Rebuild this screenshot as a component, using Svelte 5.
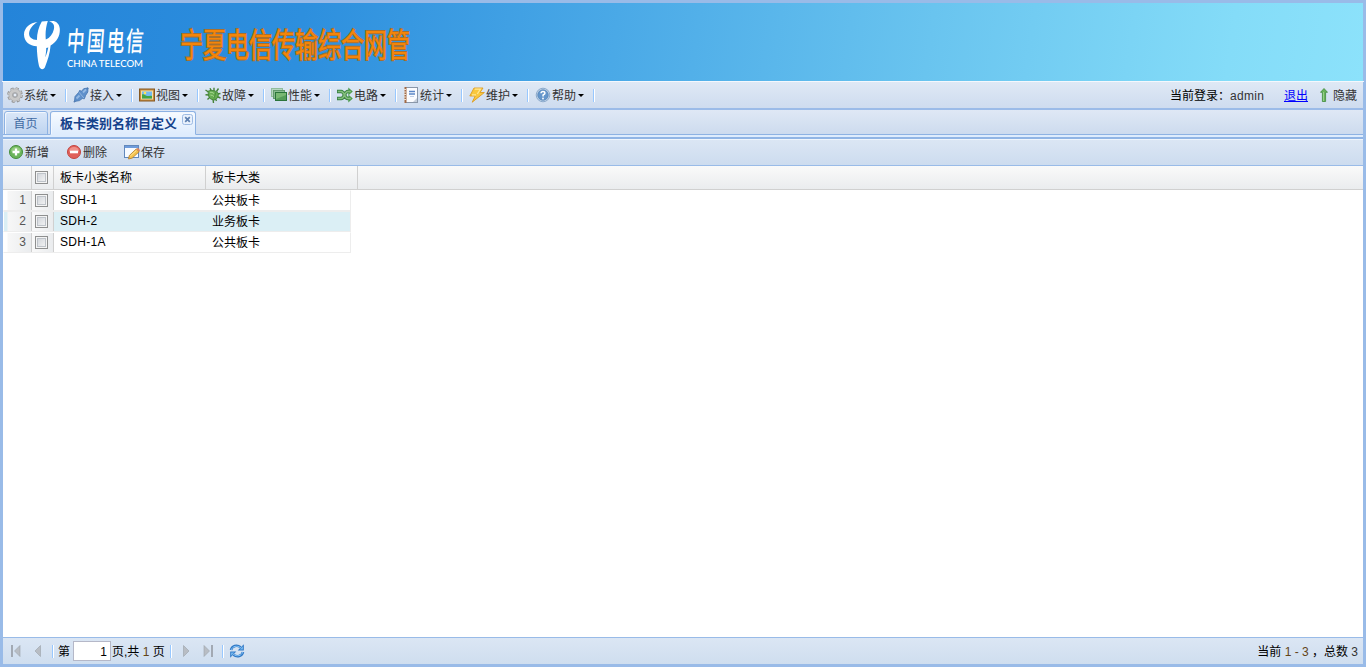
<script>
  const menus = [
    { id: 'gear', label: '系统' },
    { id: 'plug', label: '接入' },
    { id: 'view', label: '视图' },
    { id: 'bug', label: '故障' },
    { id: 'layers', label: '性能' },
    { id: 'route', label: '电路' },
    { id: 'report', label: '统计' },
    { id: 'bolt', label: '维护' },
    { id: 'help', label: '帮助' }
  ];
  const rows = [
    { name: 'SDH-1', type: '公共板卡' },
    { name: 'SDH-2', type: '业务板卡', active: true },
    { name: 'SDH-1A', type: '公共板卡' }
  ];
</script>

{#snippet icon(id)}
  <svg class="ico" width="16" height="16" viewBox="0 0 16 16">
    {#if id === 'gear'}
      <circle cx="8" cy="8" r="6.5" fill="none" stroke="#8f8f8f" stroke-width="2.6" stroke-dasharray="2.9 2.2" />
      <circle cx="8" cy="8" r="4.4" fill="none" stroke="#999" stroke-width="4" />
      <circle cx="8" cy="8" r="4.3" fill="none" stroke="#c9c9c9" stroke-width="3.2" />
      <circle cx="8" cy="8" r="6.4" fill="none" stroke="#c4c4c4" stroke-width="1.6" stroke-dasharray="2.1 2.93" />
      <circle cx="8" cy="8" r="2" fill="#e6edf7" stroke="#8c8c8c" stroke-width=".8" />
    {:else if id === 'plug'}
      <path d="M.8 15.2 3 13M13 3l2.2-2.2" stroke="#6d8cb8" stroke-width="1.6" />
      <path d="M1.5 14.5 2 9.500 6 5 6.500 3.500 8.500 4 11 1.600 15 1 14.800 5 12.600 8.400 11.400 11.800 9.300 11.500 6.500 13.600Z" fill="#5f90cb" stroke="#4473ae" stroke-width=".8" />
      <path d="m3.500 11.500 3-3M10 5.500l3-3" stroke="#93b9e4" stroke-width="1.800" /><path d="m6 5.200 5 6" stroke="#8fb4df" />
    {:else if id === 'view'}
      <rect x=".5" y="2" width="15" height="12" fill="#c58b43" stroke="#865820" />
      <rect x="2.5" y="4" width="11" height="8" fill="#76baf0" stroke="#f6df9e" />
      <path d="M3 7.500c2-1 3 1 5 1.500s3-1 5 0v2.500H3z" fill="#45a441" /><circle cx="6" cy="6" r="1.300" fill="#ffe458" />
    {:else if id === 'bug'}
      <path d="m.5 3 3 2M.5 7.800 4 8M2.500 12.500 5 10M5 1.200l1.500 3M9 .8 9 4M13.500 1.500 11.500 4.500M15.500 6.500 12 7M15.500 11 12 9.500M11.500 14 10 11M8.500 16 8 12" stroke="#478338" stroke-width="1.400" />
      <path d="M3 4.200Q6 2.500 10 4q4 1 3.300 4.300Q13 12 9 13.200 4.500 12.500 3.500 9Z" fill="#66ad52" stroke="#3d7c34" stroke-width=".8" />
      <path d="M5 5.300q2-.5 4 1.200M5.400 8q2.500 0 4 2" fill="none" stroke="#a6d68e" /><path d="M11 5 9 11.500" stroke="#417f36" stroke-width=".7" />
    {:else if id === 'layers'}
      <rect x=".5" y="1.500" width="11" height="8" fill="#b6d6bf" stroke="#91bd9c" />
      <rect x="2.500" y="3.500" width="11" height="8" fill="#89bb90" stroke="#62996d" />
      <rect x="4.500" y="5.500" width="11" height="8" fill="#559d59" stroke="#2b743b" /><path d="M5 6h10v2L5 12z" fill="#79b873" />
    {:else if id === 'route'}
      <path d="M0 4.500h4.200Q6 4.500 7.500 8t3.400 3.500H13M0 11.500h4.200Q6 11.500 7.500 8t3.400-3.500H13" fill="none" stroke="#398343" stroke-width="3.400" />
      <path d="m11.300.5 4.500 4-4.500 4zM11.300 7.500l4.500 4-4.500 4z" fill="#4b9a4b" />
      <path d="M.8 4.500h3.400Q6 4.500 7.500 8t3.400 3.500h3M.8 11.500h3.400Q6 11.500 7.500 8t3.400-3.500h3" fill="none" stroke="#84bd7b" stroke-width="1.600" />
    {:else if id === 'report'}
      <rect x="2.500" y=".5" width="12" height="15" fill="#fbfcff" stroke="#8a97a9" />
      <path d="M2.500 0v16" stroke="#a36a45" stroke-width="2" /><path d="M1 2.500h2M1 5h2M1 7.500h2M1 10h2M1 12.500h2" stroke="#eddfd0" />
      <path d="M6 4.500h6M6 7h6" stroke="#5b86c8" stroke-width="1.400" /><path d="M7 9.500h4" stroke="#c0cfe6" /><path d="m10 15 4-4V15z" fill="#c5cedb" />
    {:else if id === 'bolt'}
      <path d="M5 1h9l-3 4.500h4.400L3.200 15.200 6.200 9H.8z" fill="#f9c83e" stroke="#dc9d22" stroke-width=".9" /><path d="M5.800 2.200h5.700L8.300 7M3 7.800h4" fill="none" stroke="#ffe894" stroke-width="1.200" />
    {:else if id === 'help'}
      <circle cx="8" cy="8" r="6.800" fill="#c4d5e8" stroke="#8caacc" /><circle cx="8" cy="8" r="5.300" fill="#6596cb" stroke="#4d7db1" stroke-width=".6" />
      <path d="M6 6.300q.1-1.800 2-1.800t2 1.600Q10 7.200 8.100 8v1.400" fill="none" stroke="#fff" stroke-width="1.500" /><circle cx="8" cy="11.500" r=".9" fill="#fff" />
    {:else if id === 'add' || id === 'del'}
      <circle cx="8" cy="8" r="6.500" fill={id === 'add' ? '#6bb45b' : '#e0605a'} stroke={id === 'add' ? '#458d3c' : '#c4453f'} />
      <path d="M3 7.500a5 4.500 0 0 1 10 0" fill={id === 'add' ? '#91cb7d' : '#ef918a'} />
      {#if id === 'add'}<path d="M8 4.500v7M4.500 8h7" stroke="#fff" stroke-width="2.300" />{:else}<path d="M4 8h8" stroke="#fff" stroke-width="2.600" />{/if}
    {:else if id === 'save'}
      <rect x=".5" y="1.500" width="14" height="12" fill="#f8fbff" stroke="#6288bb" /><path d="M1 3h13" stroke="#6e9cdc" stroke-width="2" />
      <path d="m4.500 15 .8-3.500L12.200 5l3 2.700-7 6.400z" fill="#f4c24c" stroke="#b17b29" stroke-width=".8" /><path d="m12.200 5 1.200-1.100q2.300.2 2.400 2.500L15.200 7.700z" fill="#dc8360" /><path d="m6.300 12 6-5.500" stroke="#ffe99e" />
    {:else if id === 'refresh'}
      <path d="M2 7C3 2.800 8 1.400 11.500 4.200" fill="none" stroke="#2f78c6" stroke-width="2.600" /><path d="M14.800 1.200v6.300H8.700z" fill="#2f78c6" />
      <path d="M14 9C13 13.200 8 14.600 4.500 11.800" fill="none" stroke="#2f78c6" stroke-width="2.600" /><path d="M1.200 14.800V8.500h6.100z" fill="#2f78c6" />
      <path d="M2.300 6.800C3.500 3.200 8 2 11.500 4.700M13.700 9.200C12.500 12.800 8 14 4.500 11.300" fill="none" stroke="#8cc8f8" stroke-width="1" /><path d="M13.900 3.200v3.400h-3.200zM2.100 12.800V9.400h3.200z" fill="#74b8f0" />
    {/if}
  </svg>
{/snippet}

{#snippet pager(kind)}
  <svg class="pg" width="14" height="16" viewBox="0 0 14 16">
    <g transform={kind === 'next' || kind === 'last' ? 'translate(14 0) scale(-1 1)' : ''}>
      {#if kind === 'first' || kind === 'last'}<rect x="2" y="2" width="2" height="12" fill="#a2a9b3" /><path d="M11 2.500v11L5.500 8z" fill="#b8bdc4" stroke="#9ba1a9" stroke-width=".6" />
      {:else}<path d="M9.500 2.500v11L4 8z" fill="#b8bdc4" stroke="#9ba1a9" stroke-width=".6" />{/if}
    </g>
  </svg>
{/snippet}

<div class="page">
  <header>
    <svg class="mark" width="38" height="52" viewBox="0 0 38 52">
      <path d="M13.500 2C6 2.500 0 8 0 14.500 0 21.500 5.500 26 12.800 26.200 12.900 32 13.600 40 14.900 45.500 16 50.200 20 50.400 21.200 46.500 23.500 40.500 26 33.500 26.600 25.500 34 21 36.500 14 35.700 8 35 2.500 30.500-.3 25 1.500 29.500 2.500 30.800 5 29.800 9.500 28.800 14 26 17.800 21.800 19.600 21.200 13.500 21.800 7 23.800 1L17.800 1.600C14.600 7 13 13.500 12.900 20 7.800 19.500 4.900 17 5.100 13.300 5.400 8.800 9 4.700 13.500 2ZM24.300 27.500C23.500 31 22.800 34 21.200 37.500 21.900 34 22.200 31 22.200 28Z" fill="#fff" fill-rule="evenodd" />
    </svg>
    <div class="brand">
      <div class="cn"><span>中</span><span>国</span><span>电</span><span>信</span></div>
      <div class="en">CHINA TELECOM</div>
    </div>
    <h1>宁夏电信传输综合网管</h1>
  </header>

  <nav>
    {#each menus as m}
      <div class="menu">{@render icon(m.id)}<span>{m.label}</span><i class="caret"></i></div>
    {/each}
    <div class="user">
      <span class="who">当前登录：</span><span class="login">admin</span><a href="#exit">退出</a>
      <svg class="up" width="8" height="14" viewBox="0 0 8 14"><path d="M4 .5 7.500 4.300H5.600V13.500H2.400V4.300H.5Z" fill="#69b35b" stroke="#3f8b3a" stroke-width=".8" /><path d="M3.500 4v9" stroke="#a3d597" stroke-width=".8" /></svg>
      <span class="hide">隐藏</span>
    </div>
  </nav>

  <div class="tabs">
    <div class="tab">首页</div>
    <div class="tab on">板卡类别名称自定义
      <svg class="close" width="11" height="11" viewBox="0 0 11 11"><rect x=".5" y=".5" width="10" height="10" rx="2" fill="#e9f1fc" stroke="#9dbbe3" /><path d="m3.200 3.200 4.600 4.600M7.800 3.200 3.200 7.800" stroke="#5d80b0" stroke-width="1.700" /></svg>
    </div>
  </div>
  <div class="strip"></div>

  <main>
    <div class="tools">
      <div class="tool">{@render icon('add')}<span>新增</span></div>
      <div class="tool">{@render icon('del')}<span>删除</span></div>
      <div class="tool">{@render icon('save')}<span>保存</span></div>
    </div>
    <div class="ghead">
      <div class="c0"></div><div class="c1"><i class="box"></i></div><div class="c2">板卡小类名称</div><div class="c3">板卡大类</div>
    </div>
    <div class="gbody">
      {#each rows as r, n}
        <div class="row" class:active={r.active}>
          <div class="c0">{n + 1}</div><div class="c1"><i class="box"></i></div><div class="c2">{r.name}</div><div class="c3">{r.type}</div>
        </div>
      {/each}
    </div>
    <footer>
      {@render pager('first')}{@render pager('prev')}
      <i class="sep"></i><span class="di">第</span><div class="num">1</div><span class="total">页,共 <b>1</b> 页</span><i class="sep s2"></i>
      {@render pager('next')}{@render pager('last')}
      <i class="sep s3"></i>{@render icon('refresh')}
      <span class="sum">当前 <b>1 - 3</b> ，总数 <em>3</em></span>
    </footer>
  </main>
</div>

<style>
  :global(body) { margin: 0; overflow: hidden; }
  .page, .page * { box-sizing: border-box; }
  .page { width: 1366px; height: 667px; padding: 3px 2px 2px 2px; background: #99bbe8; font: 12px/16px "Liberation Sans", "Noto Sans CJK SC", sans-serif; color: #000; display: flex; flex-direction: column; white-space: nowrap; }
  .ico { display: block; flex: none; }
  header { height: 78px; margin: 0 1px; flex: none; display: flex; background: linear-gradient(98deg, #2484d9 0%, #2d8fde 22%, #4aa9e7 45%, #69c4ef 68%, #84dcf8 90%, #8ce2fb 100%); }
  .mark { margin: 17px 0 0 21px; flex: none; }
  .brand { width: 78px; margin: 20px 0 0 5px; color: #fff; }
  .cn { height: 34px; width: 77px; display: flex; justify-content: space-between; font: 500 17.500px/34px "Noto Sans CJK SC", sans-serif; }
  .cn span { transform: scaleY(1.550) skewX(-7deg); }
  .en { font: 500 9.600px/11px Lato, sans-serif; width: 77px; margin-top: 1px; letter-spacing: -.05px; }
  h1 { margin: 20px 0 0 35px; height: 40px; font: 400 23px/40px "Noto Sans CJK SC", sans-serif; color: #f58508; -webkit-text-stroke: 1.400px #a8702d; paint-order: stroke fill; transform: scaleY(1.420); }
  nav { height: 29px; flex: none; padding-left: 5px; border-top: 1px solid #f4f8fd; border-bottom: 2px solid #9bbbe8; background: linear-gradient(#dfe9f5, #cedcef); display: flex; color: #333; box-shadow: inset 1px 0 #99bbe8, inset -1px 0 #99bbe8; }
  .menu { width: 66px; height: 26px; display: flex; align-items: center; }
  .menu span { margin: 2px 0 0 1px; }
  .menu::after { content: ""; box-sizing: border-box; flex: none; width: 2px; height: 13px; margin-left: 9px; border-left: 1px solid #98c8ff; border-right: 1px solid #fff; }
  .caret { width: 0; border: 3px solid transparent; border-top-color: #000; border-bottom: 0; margin: 1px 0 0 2px; }
  .user { margin-left: auto; display: flex; align-items: center; height: 28px; padding-right: 7px; }
  .who { color: #000; width: 60px; }
  .login { width: 54px; letter-spacing: .3px; }
  .user a { color: #00f; margin-right: 12px; }
  .up { margin-top: -2px; }
  .hide { margin-left: 5px; }
  .tabs { height: 25px; flex: none; margin: 0 1px; padding: 1px 0 0 1px; border-bottom: 1px solid #8db2e3; background: linear-gradient(#dfe8f5, #cddbee); display: flex; align-items: flex-start; }
  .tab { width: 44px; height: 24px; border: 1px solid #8db2e3; border-radius: 3px 3px 0 0; background: linear-gradient(#dae7f8, #bed4f0); box-shadow: inset 1px 1px #f2f7fe; color: #416aa3; text-align: center; line-height: 24px; padding-right: 1px; }
  .tab.on { position: relative; width: 146px; margin-left: 2px; padding-left: 9px; background: linear-gradient(#f7fbff, #deecfd); border-bottom-color: #deecfd; color: #15428b; font-size: 13px; font-weight: bold; text-align: left; }
  .close { position: absolute; right: 2px; top: 2px; }
  .strip { height: 4px; flex: none; margin: 0 1px; background: #deecfd; border-bottom: 2px solid #91b5e5; }
  main { flex: 1; min-height: 0; border: solid #99bbe8; border-width: 0 1px 1px; background: #fff; display: flex; flex-direction: column; }
  .tools { height: 27px; flex: none; background: linear-gradient(#dbe6f4, #cddcef); border-top: 1px solid #eff5fc; border-bottom: 1px solid #99bbe8; padding-left: 5px; display: flex; color: #333; }
  .tool { width: 58px; display: flex; align-items: center; height: 24px; }
  .tool span { margin: 2px 0 0 1px; }
  .ghead { height: 24px; flex: none; display: flex; border-bottom: 1px solid #d0d0d0; background: linear-gradient(#fafafa, #eaecee); line-height: 25px; }
  .c0 { width: 29px; flex: none; border-right: 1px solid #d0d0d0; }
  .c1 { width: 22px; flex: none; border-right: 1px solid #d0d0d0; display: flex; align-items: center; justify-content: center; padding-right: 2px; }
  .c2, .c3 { width: 152px; flex: none; padding-left: 6px; }
  .ghead .c2, .ghead .c3 { border-right: 1px solid #d0d0d0; }
  .box { width: 13px; height: 13px; flex: none; border: 1px solid #8e8f8f; background: linear-gradient(135deg, #ccd0d6, #f8f8f8); box-shadow: inset 0 0 0 1px #f4f4f4, inset 0 0 0 2px #bec3c9; }
  .gbody { flex: 1; }
  .row { width: 348px; height: 21px; display: flex; border: 1px solid #ededed; border-top-color: #fff; border-left-color: #fff; line-height: 18px; }
  .row .c0 { width: 28px; padding-right: 5px; text-align: right; color: #555; background: linear-gradient(90deg, #fff 3px, #f7f7f7 4px, #eaecee); }
  .row .c1 { background: linear-gradient(90deg, #f9f9f9, #eaecee); }
  .row .c2 { letter-spacing: .3px; }
  .row .c3 { width: 145px; line-height: 20px; }
  .row.active { background: #dbeff5; border-top-color: #ededed; }
  .row.active .c0 { background: linear-gradient(90deg, #dbeff5 3px, #f7f7f7 4px, #eaecee); }
  footer { height: 27px; flex: none; border-top: 1px solid #99bbe8; background: linear-gradient(#dbe6f4, #cfdeef); display: flex; align-items: center; padding: 0 5px 0 6px; }
  .pg { margin-right: 8px; flex: none; }
  .sep { width: 2px; height: 13px; margin-left: -1px; border-left: 1px solid #98c8ff; border-right: 1px solid #fff; }
  .di { margin: 2px 0 0 4px; width: 15px; }
  .num { width: 38px; height: 20px; background: #fff; border: 1px solid #b5b8c8; text-align: right; padding-right: 3px; line-height: 20px; }
  .total { margin: 2px 0 0 1px; width: 58px; }
  .total b, .sum b { font-weight: normal; color: #624417; }
  .sum em { font-style: normal; color: #333; }
  .s2 { margin: 0 7px 0 0; }
  .s3 { margin: 0 5px 0 -1px; }
  .sum { margin: 2px 0 0 auto; }
</style>
